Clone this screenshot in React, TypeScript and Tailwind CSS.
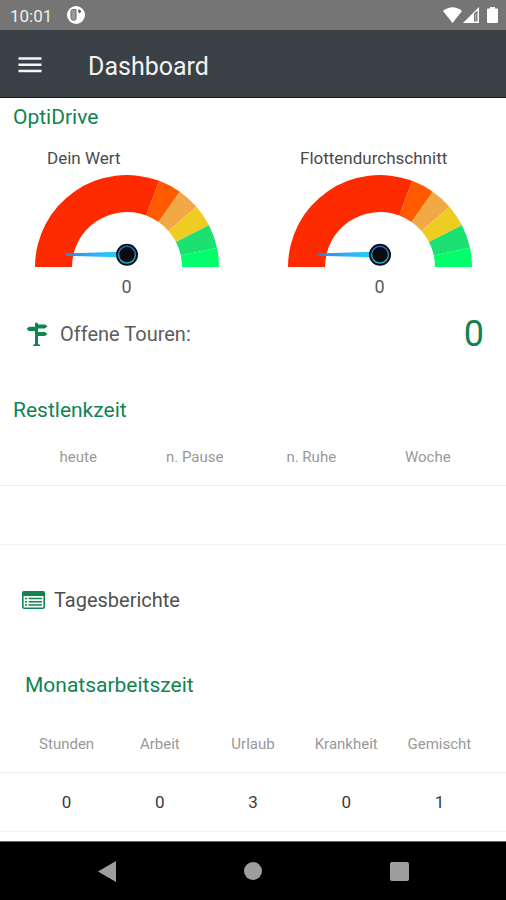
import React from 'react';

const SEGMENTS = [
  { from: 180, to: 69.5, color: '#ff2b00' },
  { from: 69.5, to: 55, color: '#ff5a00' },
  { from: 55, to: 41, color: '#f2a845' },
  { from: 41, to: 27, color: '#efcc22' },
  { from: 27, to: 12, color: '#1be072' },
  { from: 12, to: 0, color: '#00ff6a' },
];

function point(radius: number, degrees: number) {
  const a = (degrees * Math.PI) / 180;
  return `${(92 + radius * Math.cos(a)).toFixed(2)} ${(92 - radius * Math.sin(a)).toFixed(2)}`;
}

function ringPath(from: number, to: number) {
  return `M${point(92, from)}A92 92 0 0 1 ${point(92, to)}L${point(55, to)}A55 55 0 0 0 ${point(55, from)}Z`;
}

function Gauge({ id, label, value }: { id: string; label: string; value: number }) {
  return (
    <figure className="flex flex-1 flex-col items-center">
      <figcaption className="w-full pl-[47px] text-[17px] leading-6 text-[#4a4a4a]">{label}</figcaption>
      <svg className="mt-[5px] h-[92px] w-[184px]" viewBox="0 0 184 92" aria-hidden="true">
        <defs>
          <linearGradient id={`${id}-needle`} x1="0" x2="1" y1="0" y2="0">
            <stop offset="0" stopColor="#2b86d9" />
            <stop offset="0.5" stopColor="#2fb4f5" />
            <stop offset="1" stopColor="#1fd6fa" />
          </linearGradient>
          <linearGradient id={`${id}-hub`} x1="0" x2="0" y1="0" y2="1">
            <stop offset="0" stopColor="#2563c9" />
            <stop offset="1" stopColor="#22b3c4" />
          </linearGradient>
        </defs>
        {SEGMENTS.map((s) => (
          <path key={s.from} d={ringPath(s.from, s.to)} fill={s.color} />
        ))}
        <path d="M30 78.6L92 76.5V82.5L30 80.8Z" fill={`url(#${id}-needle)`} />
        <circle cx="92" cy="79.7" r="11" fill="#0b1118" />
        <circle cx="92" cy="79.7" r="8.4" fill="#0b0b0d" stroke={`url(#${id}-hub)`} strokeWidth="1.5" />
      </svg>
      <p className="mt-2 text-lg leading-6 text-[#5a5a5a]">{value}</p>
    </figure>
  );
}

function DataTable({ label, columns, rows }: { label: string; columns: string[]; rows: string[][] }) {
  return (
    <table className="block w-full text-center" aria-label={label}>
      <thead className="block">
        <tr className="flex h-[58px] items-center border-b border-[#ececec] px-5 pt-0.5">
          {columns.map((c) => (
            <th key={c} scope="col" className="flex-1 text-[15px] font-normal text-[#999999]">
              {c}
            </th>
          ))}
        </tr>
      </thead>
      <tbody className="block">
        {rows.map((row, r) => (
          <tr key={r} className="flex h-[59px] items-center border-b border-[#f3f3f3] px-5 pt-0.5">
            {row.map((cell, i) => (
              <td key={i} className="flex-1 text-[17px] text-[#3a3a3a]">
                {cell}
              </td>
            ))}
          </tr>
        ))}
      </tbody>
    </table>
  );
}

export default function App() {
  return (
    <div className="flex min-h-screen flex-col bg-white font-[Roboto,sans-serif]">
      <div className="flex h-[30px] items-center bg-[#757575] pr-2 pl-[10px] text-white">
        <span className="pt-0.5 text-[17px] leading-6 text-[#f0f0f0]">10:01</span>
        <svg className="ml-[15px] size-[18px]" viewBox="0 0 18 18" aria-hidden="true">
          <circle cx="9" cy="9" r="9" fill="#fff" />
          <path d="M4 5.200Q4 3.600 5.600 3.600H9V12.500Q9 14.600 6.500 14.200Q4 14 4 12Z" fill="#9a9a9a" stroke="#686868" strokeWidth="1" />
          <path d="M11.500 3.200Q14 3.600 14.200 5.600L12.800 7.600L11 6Z" fill="#606060" />
        </svg>
        <div className="ml-auto flex items-center">
          <svg className="h-4 w-[19px]" viewBox="0 0 19 16" aria-hidden="true">
            <path d="M0 4Q9.500 -3.500 19 4L9.500 16Z" fill="#fff" />
          </svg>
          <svg className="ml-px h-4 w-4" viewBox="0 0 16 16" aria-hidden="true">
            <path fillRule="evenodd" d="M0 16L16 0V16ZM11 6.600V14.500H14.500V3.600Z" fill="#fff" />
            <path d="M12.200 7H13.300V14.500H12.200Z" fill="#fff" fillOpacity="0.5" />
          </svg>
          <svg className="ml-2 h-4 w-[11px]" viewBox="0 0 11 16" aria-hidden="true">
            <path d="M3 0H8V1.500H10Q11 1.500 11 2.500V15Q11 16 10 16H1Q0 16 0 15V2.500Q0 1.500 1 1.500H3Z" fill="#fff" />
          </svg>
        </div>
      </div>

      <header className="flex h-[68px] items-center border-b border-[#101a22] bg-[#394046] pl-[18px] text-white">
        <button type="button" aria-label="Menü" className="block">
          <svg className="h-[18px] w-6" viewBox="0 0 24 18" aria-hidden="true">
            <path d="M0.500 3.500H23.500M0.500 9.700H23.500M0.500 16H23.500" stroke="#f5f5f5" strokeWidth="2.500" />
          </svg>
        </button>
        <h1 className="ml-[46px] pt-1.5 text-[25px] leading-8 text-[#f2f2f2]">Dashboard</h1>
      </header>

      <main className="flex-1">
        <section>
          <h2 className="px-[13px] pt-[7px] text-[21px] leading-6 text-[#118351]">OptiDrive</h2>
          <div className="flex pt-[17px]">
            <Gauge id="own" label="Dein Wert" value={0} />
            <Gauge id="fleet" label="Flottendurchschnitt" value={0} />
          </div>
          <div className="mt-[15px] flex h-10 items-center pr-[22px] pl-[26px]">
            <svg className="h-6 w-[22px]" viewBox="0 0 22 24" aria-hidden="true">
              <path
                d="M9 1.500Q10.500 -0.500 12 1.500V2.500H19L21.500 4.300L19 6.500H12V10H19L21.500 12L19 14H12V22Q14.500 22.300 14.500 24H7Q7 22.300 9 22V9H3L0.500 7L3 4.800H9Z"
                fill="#118351"
              />
            </svg>
            <span className="ml-3 text-xl leading-6 text-[#5c5c5c]">Offene Touren:</span>
            <span className="ml-auto text-4xl leading-10 text-[#118351]">0</span>
          </div>
        </section>

        <section className="pt-11">
          <h2 className="px-[13px] text-[21px] leading-6 text-[#118351]">Restlenkzeit</h2>
          <div className="pt-[6px]">
            <DataTable label="Restlenkzeit" columns={['heute', 'n. Pause', 'n. Ruhe', 'Woche']} rows={[['', '', '', '']]} />
          </div>
        </section>

        <a href="#tagesberichte" className="mt-[43px] flex h-6 items-center pl-[22px]">
          <svg className="h-[18px] w-[23px]" viewBox="0 0 23 18" aria-hidden="true">
            <rect x="0.800" y="0.800" width="21.400" height="16.400" rx="1.500" fill="#fff" stroke="#118351" strokeWidth="1.600" />
            <path d="M0.500 0.500H22.500V5H0.500Z" fill="#118351" />
            <path d="M3 7.500H5M3 10.700H5M3 13.900H5M6.500 7.500H20M6.500 10.700H20M6.500 13.900H20" stroke="#118351" strokeWidth="1.500" />
          </svg>
          <span className="ml-[9px] text-xl leading-6 text-[#505050]">Tagesberichte</span>
        </a>

        <section className="pt-[61px]">
          <h2 className="px-[25px] text-[21px] leading-6 text-[#118351]">Monatsarbeitszeit</h2>
          <div className="pt-[18px]">
            <DataTable
              label="Monatsarbeitszeit"
              columns={['Stunden', 'Arbeit', 'Urlaub', 'Krankheit', 'Gemischt']}
              rows={[['0', '0', '3', '0', '1']]}
            />
          </div>
        </section>
      </main>

      <nav className="flex h-[59px] items-center justify-center border-t border-[#6b6b6b] bg-black" aria-label="System">
        <div className="grid w-full grid-cols-3 px-[34px]">
          <button type="button" aria-label="Zurück" className="flex justify-center">
            <svg className="h-[21px] w-[18px]" viewBox="0 0 18 21" aria-hidden="true">
              <path d="M0 10.500L18 0V21Z" fill="#9e9e9e" />
            </svg>
          </button>
          <button type="button" aria-label="Startseite" className="flex items-center justify-center">
            <span className="block size-[18px] rounded-full bg-[#9e9e9e]" />
          </button>
          <button type="button" aria-label="Übersicht" className="flex items-center justify-center">
            <span className="block size-[19px] rounded-xs bg-[#9e9e9e]" />
          </button>
        </div>
      </nav>
    </div>
  );
}
